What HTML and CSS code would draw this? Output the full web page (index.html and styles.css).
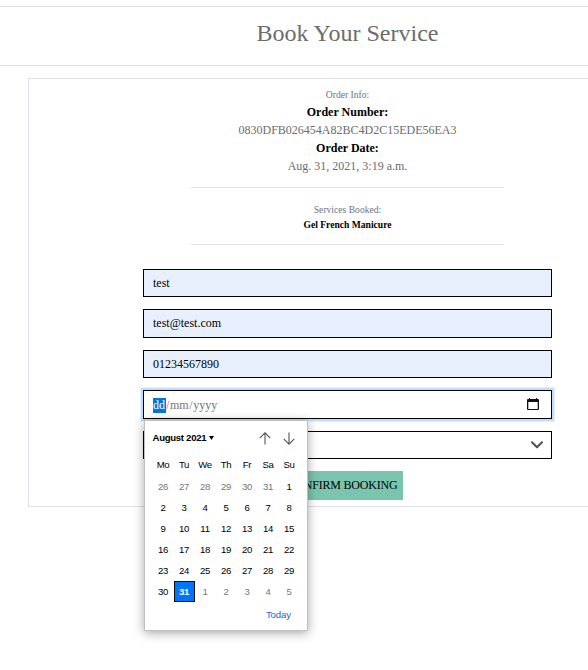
FILE: index.html
```html
<!DOCTYPE html>
<html lang="en">
<head>
<meta charset="utf-8">
<title>Book Your Service</title>
<link rel="stylesheet" href="styles.css">
</head>
<body>
<main class="page">
  <header class="heading"><h1>Book Your Service</h1></header>
  <section class="card">
    <div class="order">
      <p class="small">Order Info:</p>
      <p class="label">Order Number:</p>
      <p class="value">0830DFB026454A82BC4D2C15EDE56EA3</p>
      <p class="label">Order Date:</p>
      <p class="value">Aug. 31, 2021, 3:19 a.m.</p>
    </div>
    <div class="services">
      <p class="small">Services Booked:</p>
      <p class="service">Gel French Manicure</p>
    </div>
    <form class="form">
      <div class="field filled">test</div>
      <div class="field filled">test@test.com</div>
      <div class="field filled">01234567890</div>
      <div class="field date">
        <span class="date-text"><span class="selected">dd</span>/<span class="part">mm</span>/<span class="part">yyyy</span></span>
        <svg class="calendar-icon" width="12" height="13" viewBox="0 0 12 13"><path d="M2 0h1v1h6V0h1v1h1q1 0 1 1v9q0 1-1 1H1q-1 0-1-1V2q0-1 1-1h1zM1.3 4v7h9.4V4z" fill="#111" fill-rule="evenodd"/></svg>
        <div class="picker">
          <div class="picker-head">
            <strong>August 2021</strong>
            <svg class="caret" width="5" height="4" viewBox="0 0 5 4"><path d="M0 0h5L2.5 4z"/></svg>
            <svg class="arrow" width="12" height="13" viewBox="0 0 12 13"><path d="M6 12.5V1M.7 6.2L6 .9l5.3 5.3"/></svg>
            <svg class="arrow" width="12" height="13" viewBox="0 0 12 13"><path d="M6 .5V12M.7 6.8L6 12.1l5.3-5.3"/></svg>
          </div>
          <div class="days names"><span>Mo</span><span>Tu</span><span>We</span><span>Th</span><span>Fr</span><span>Sa</span><span>Su</span></div>
          <div class="days">
            <span class="out">26</span><span class="out">27</span><span class="out">28</span><span class="out">29</span><span class="out">30</span><span class="out">31</span><span>1</span>
            <span>2</span><span>3</span><span>4</span><span>5</span><span>6</span><span>7</span><span>8</span>
            <span>9</span><span>10</span><span>11</span><span>12</span><span>13</span><span>14</span><span>15</span>
            <span>16</span><span>17</span><span>18</span><span>19</span><span>20</span><span>21</span><span>22</span>
            <span>23</span><span>24</span><span>25</span><span>26</span><span>27</span><span>28</span><span>29</span>
            <span>30</span><span class="today">31</span><span class="out">1</span><span class="out">2</span><span class="out">3</span><span class="out">4</span><span class="out">5</span>
          </div>
          <div class="today-link">Today</div>
        </div>
      </div>
      <div class="field select">
        <svg width="12" height="8" viewBox="0 0 12 8"><path d="M1 1.2l5 5 5-5" fill="none" stroke="#495057" stroke-width="2" stroke-linecap="round" stroke-linejoin="round"/></svg>
      </div>
      <button class="confirm" type="button">CONFIRM BOOKING</button>
    </form>
  </section>
</main>
</body>
</html>
```
FILE: styles.css
```css
* { box-sizing: border-box; }
body {
  margin: 0;
  height: 670px;
  background: #fff;
  color: #000;
  font-family: "Liberation Serif", "Times New Roman", serif;
  font-size: 12px;
}
p, h1 { margin: 0; }
.page { width: 588px; padding-top: 6px; }
.heading {
  height: 60px;
  padding-left: 107px;
  border: solid #dee2e6;
  border-width: 1px 0;
  text-align: center;
}
h1 {
  padding-top: 12px;
  color: #6c6c6c;
  font-size: 24px;
  line-height: 29px;
  font-weight: 400;
}
.card {
  height: 429px;
  margin: 12px 0 0 28px;
  padding: 7px 0 0 78px;
  border: 1px solid #dee2e6;
  border-right: 0;
}
.order, .services {
  width: 313px;
  margin: 0 auto;
  border-bottom: 1px solid #e3e3e3;
  text-align: center;
}
.order { height: 102px; }
.services { height: 57px; padding-top: 13px; }
.small { color: #6c757d; font-size: 9.6px; line-height: 17px; }
.label, .value { line-height: 18px; }
.label { font-weight: 700; }
.value { color: #6c6c6c; }
.service { font-size: 9.6px; font-weight: 700; line-height: 14px; }
.form {
  display: flex;
  flex-direction: column;
  align-items: center;
  gap: 12px;
  margin-top: 23.7px;
}
.field {
  width: 409px;
  height: 28.5px;
  padding: 0 9px;
  border: 1px solid #000;
  line-height: 26px;
}
.filled { background: #e8f0fe; }
.date {
  position: relative;
  display: flex;
  align-items: center;
  justify-content: space-between;
  padding-right: 12px;
  box-shadow: 0 0 0 2px #bfdeff, 0 0 0 3px #e3f0ff;
  color: #757575;
}
.date-text { line-height: 15px; padding-top: 2px; }
.selected { display: inline-block; width: 13px; background: #0078d7; color: #fff; }
.part { margin: 0 .6px; }
.calendar-icon { margin-top: 0; }
.select {
  display: flex;
  align-items: center;
  justify-content: flex-end;
  padding-right: 8px;
}
.select svg { margin-top: 1px; }
.confirm {
  width: 121px;
  height: 29px;
  margin-right: 10px;
  padding: 0;
  border: 0;
  background: #7bc5ae;
  color: #000;
  font: 12px "Liberation Serif", "Times New Roman", serif;
  letter-spacing: -.2px;
  white-space: nowrap;
}
.picker {
  position: absolute;
  z-index: 2;
  top: 29px;
  left: 0;
  width: 164px;
  height: 211px;
  padding: 7px 8px 0;
  border: 1px solid #bfbfbf;
  background: #fff;
  box-shadow: 0 2px 10px rgba(0, 0, 0, .35);
  color: #000;
  font-family: "Liberation Sans", Arial, sans-serif;
  font-size: 9.6px;
  letter-spacing: -.3px;
}
.picker-head {
  display: flex;
  align-items: center;
  height: 19px;
  padding-right: 4px;
}
.picker-head strong { margin-left: -.5px; }
.caret { margin: 0 auto 0 3px; }
.arrow { margin: 2px 0 0 12px; fill: none; stroke: #555; stroke-width: 1.1; }
.days {
  display: grid;
  grid-template-columns: repeat(7, 21px);
  grid-auto-rows: 21px;
  margin-left: -.5px;
  text-align: center;
  line-height: 21px;
}
.names { margin-top: 7px; margin-bottom: 1px; }
.out { color: #767676; }
.today {
  border: 1px solid #101010;
  background: #0075ff;
  color: #fff;
  font-weight: 700;
  line-height: 19px;
}
.today-link {
  padding-right: 8px;
  color: #1a66c7;
  letter-spacing: -.1px;
  line-height: 25px;
  text-align: right;
}
```
